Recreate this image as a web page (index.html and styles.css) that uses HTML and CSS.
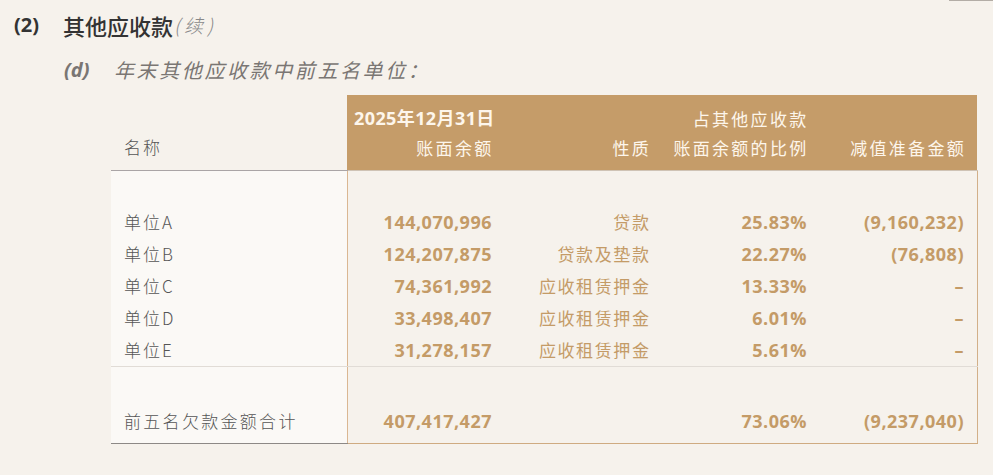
FILE: index.html
```html
<!DOCTYPE html>
<html lang="zh-CN">
<head>
<meta charset="utf-8">
<title>其他应收款（续）</title>
<link rel="stylesheet" href="styles.css">
</head>
<body>
<div class="page">
  <div class="edge"></div>
  <h2 class="title"><span class="title-num">(2)</span><span class="title-text">其他应收款</span><span class="title-cont">(续)</span></h2>
  <h3 class="sub"><span class="sub-num">(d)</span><span class="sub-text">年末其他应收款中前五名单位：</span></h3>
  <table class="tbl">
    <colgroup>
      <col class="c-name"><col class="c-num"><col class="c-num"><col class="c-num"><col class="c-num">
    </colgroup>
    <thead>
      <tr>
        <th class="h-name">名称</th>
        <th class="h-gold h-amt"><div class="h-date">2025年12月31日</div><div>账面余额</div></th>
        <th class="h-gold"><div>&nbsp;</div><div>性质</div></th>
        <th class="h-gold"><div>占其他应收款</div><div>账面余额的比例</div></th>
        <th class="h-gold"><div>&nbsp;</div><div>减值准备金额</div></th>
      </tr>
    </thead>
    <tbody>
      <tr class="spacer"><td class="name"></td><td class="amt"></td><td></td><td></td><td class="last"></td></tr>
      <tr><td class="name">单位A</td><td class="amt num">144,070,996</td><td class="txt">贷款</td><td class="num">25.83%</td><td class="num last">(9,160,232)</td></tr>
      <tr><td class="name">单位B</td><td class="amt num">124,207,875</td><td class="txt">贷款及垫款</td><td class="num">22.27%</td><td class="num last">(76,808)</td></tr>
      <tr><td class="name">单位C</td><td class="amt num">74,361,992</td><td class="txt">应收租赁押金</td><td class="num">13.33%</td><td class="num last">–</td></tr>
      <tr><td class="name">单位D</td><td class="amt num">33,498,407</td><td class="txt">应收租赁押金</td><td class="num">6.01%</td><td class="num last">–</td></tr>
      <tr class="row-end"><td class="name">单位E</td><td class="amt num">31,278,157</td><td class="txt">应收租赁押金</td><td class="num">5.61%</td><td class="num last">–</td></tr>
      <tr class="total"><td class="name">前五名欠款金额合计</td><td class="amt num">407,417,427</td><td class="txt"></td><td class="num">73.06%</td><td class="num last">(9,237,040)</td></tr>
    </tbody>
  </table>
</div>
</body>
</html>
```

FILE: styles.css
```css
html, body {
  margin: 0;
  padding: 0;
  background: #f6f2ec;
}
body {
  font-family: "Noto Sans", "Noto Sans CJK SC", sans-serif;
  color: #4a4646;
}
.page {
  width: 993px;
  height: 475px;
  overflow: hidden;
  display: flex;
  flex-direction: column;
}
.edge {
  align-self: flex-end;
  width: 44px;
  height: 1px;
  background: #b3ada6;
}
.title {
  margin: 0;
  padding: 8px 0 0 14px;
  height: 32px;
  display: flex;
  align-items: center;
  font-size: 22px;
  font-weight: 500;
  color: #333;
  line-height: 32px;
}
.title-num {
  font-family: "Open Sans", "Noto Sans", sans-serif;
  font-weight: 700;
  font-size: 20px;
  width: 49px;
  color: #333;
}
.title-text {
  font-family: "Noto Sans CJK SC", sans-serif;
  font-weight: 500;
}
.title-cont {
  font-family: "Noto Sans CJK SC", sans-serif;
  font-style: italic;
  font-weight: 300;
  font-size: 19px;
  letter-spacing: 4px;
  color: #888;
  margin-left: 1px;
}
.sub {
  margin: 0;
  padding: 0 0 0 64px;
  height: 38px;
  margin-top: 10px;
  display: flex;
  align-items: center;
  font-style: italic;
  color: #7a7673;
  line-height: 32px;
}
.sub-num {
  font-family: "Open Sans", "Noto Sans", sans-serif;
  font-weight: 700;
  font-size: 20px;
  width: 50px;
}
.sub-text {
  font-family: "Noto Sans CJK SC", sans-serif;
  font-weight: 400;
  font-size: 20px;
  letter-spacing: 2.6px;
}
.tbl {
  margin: 6px 0 0 111px;
  width: 866px;
  border-collapse: collapse;
  table-layout: fixed;
  font-size: 17px;
}
.c-name { width: 236px; }
.c-num { width: 157.5px; }
.tbl th {
  font-weight: 400;
  line-height: 29px;
  padding: 9px 11px 8px 4px;
  text-align: right;
  vertical-align: bottom;
  white-space: nowrap;
  border-bottom: 1px solid #cfc3b5;
}
.tbl th.h-name {
  text-align: left;
  color: #555;
  background: transparent;
  border-bottom-color: #aaa5a6;
  padding-left: 13px;
  padding-bottom: 9px;
  letter-spacing: 2px;
  font-family: "Noto Sans CJK SC", sans-serif;
  font-weight: 300;
}
.h-gold {
  background: #c59c69;
  color: #fdf6ec;
  letter-spacing: 2.3px;
  font-family: "Noto Sans CJK SC", sans-serif;
}
.h-date {
  text-align: left;
  font-weight: 700;
  font-size: 18px;
  letter-spacing: 0.4px;
  font-family: "Open Sans", "Noto Sans", "Noto Sans CJK SC", sans-serif;
  margin-left: 3px;
  white-space: nowrap;
}
.tbl td {
  padding: 0 13px;
  height: 32px;
  line-height: 32px;
  text-align: right;
  color: #c49b67;
  white-space: nowrap;
}
.tbl td.name {
  text-align: left;
  background: #fbf9f6;
  color: #555;
  font-family: "Noto Sans CJK SC", sans-serif;
  font-weight: 300;
  letter-spacing: 2px;
}
.tbl td.amt { border-left: 1px solid #dab792; }
.tbl td.last { border-right: 1px solid #d2b089; }
.num {
  font-family: "Open Sans", "Noto Sans", sans-serif;
  font-weight: 700;
  font-size: 18px;
  letter-spacing: 0.5px;
}
.tbl td.num { padding-right: 12.5px; }
.txt {
  font-family: "Noto Sans CJK SC", sans-serif;
  letter-spacing: 1.6px;
}
.tbl td.txt { padding-right: 11.5px; }
.tbl tr.spacer td { height: 35px; padding: 0; }
.tbl tr.row-end td { border-bottom: 1px solid #e1dcd6; }
.tbl tr.total td {
  height: 32px;
  padding-top: 38px;
  padding-bottom: 6px;
  vertical-align: bottom;
  border-bottom: 1px solid #cfab81;
}
.tbl tr.total td.name { border-bottom-color: #8d8986; letter-spacing: 2.3px; }
```
